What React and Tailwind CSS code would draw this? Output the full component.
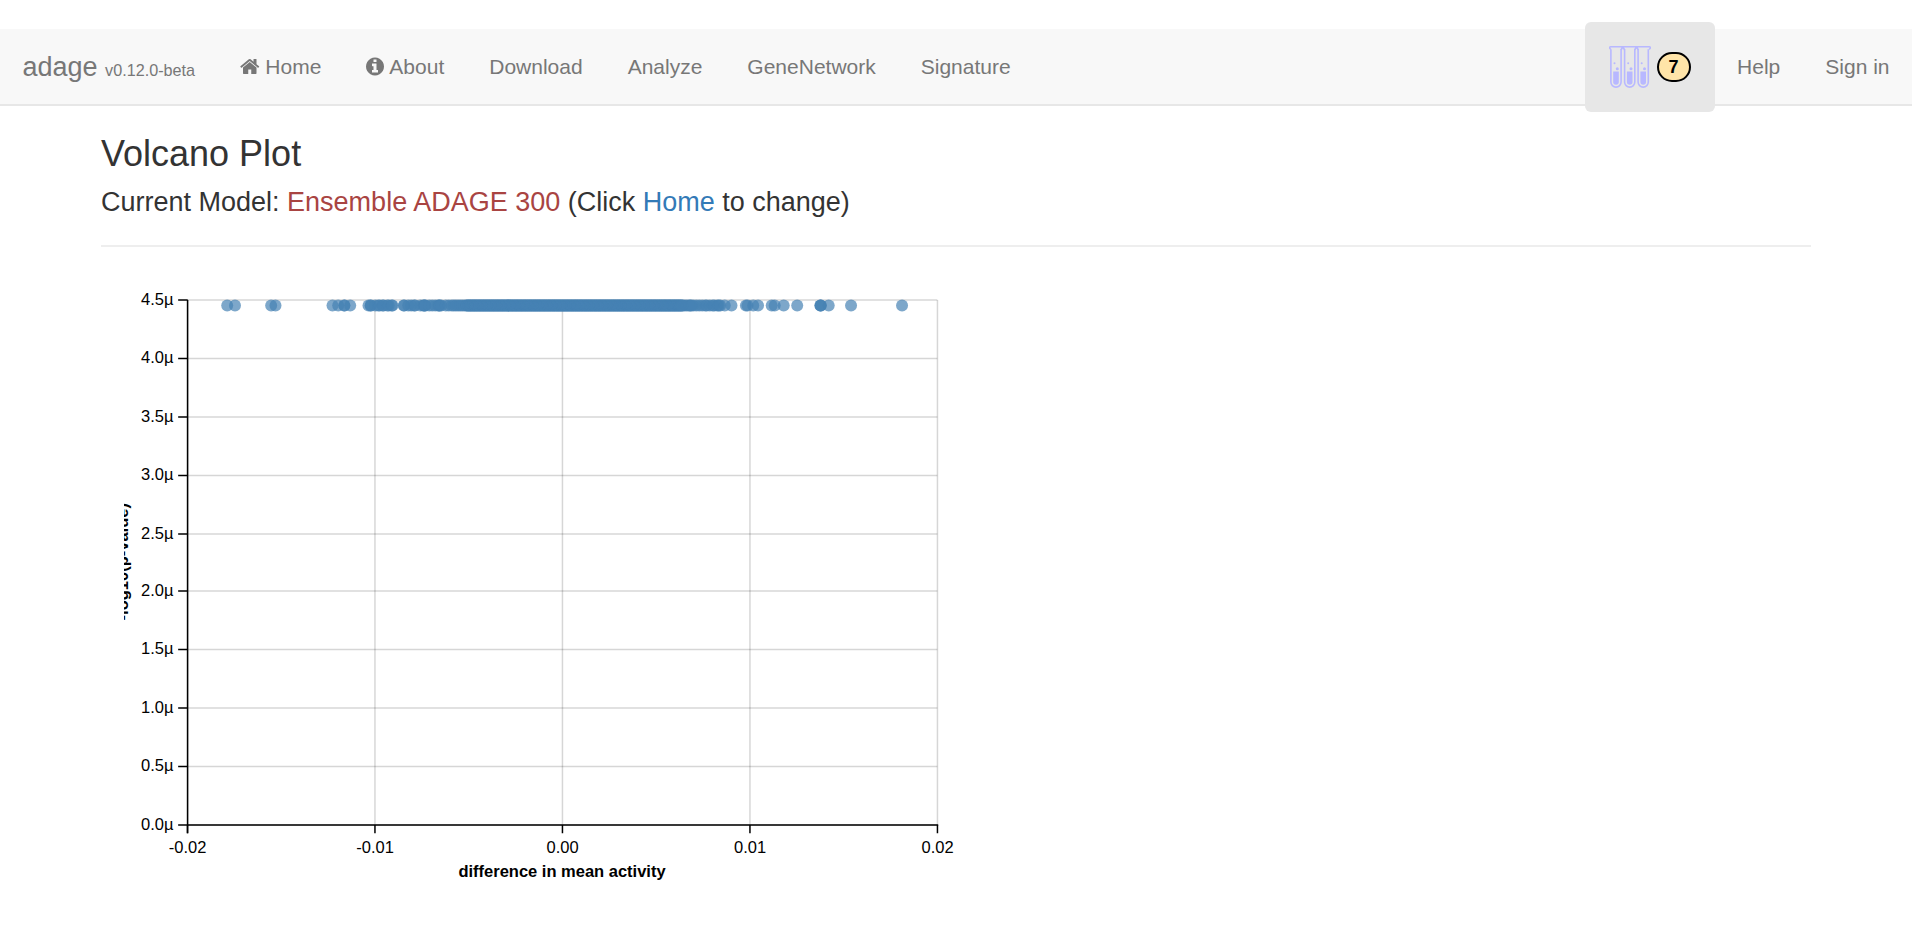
const yTicks = [
  ["4.5µ", 0], ["4.0µ", 39], ["3.5µ", 78], ["3.0µ", 117], ["2.5µ", 156],
  ["2.0µ", 194], ["1.5µ", 233], ["1.0µ", 272], ["0.5µ", 311], ["0.0µ", 350],
];
const xTicks = [["-0.02", 0], ["-0.01", 125], ["0.00", 250], ["0.01", 375], ["0.02", 500]];

// Horizontal positions of the points, in plot pixels.
const sparse = [
  26.3, 31.5, 55.6, 58.5, 96.5, 100.3, 104.4, 104.4, 108.3,
  120.5, 122, 122, 125, 127, 128, 130, 130.5, 133, 134, 136, 136.5,
  144, 144.3, 147, 149, 151, 151.5, 155, 157, 157.5, 158, 158.5, 161, 163, 165, 167, 167.5, 168, 169, 172, 174,
  335, 337, 339, 341, 343, 345, 346, 348, 350, 351, 353, 354, 355, 358, 362.5,
  372.1, 373.2, 377, 380.2, 389.3, 391.3, 397.3, 406.3, 421.8, 421.8, 422.1, 427.3, 442.2, 476.2,
];
const dense = Array.from({ length: 115 }, (_, i) => 176 + i * 1.4);
const core = Array.from({ length: 170 }, (_, i) => 186 + i * 0.85);
const points = [...sparse, ...dense, ...core];

function HomeIcon() {
  return (
    <svg className="inline-block h-[21px] w-[19.5px] align-[-3px]" viewBox="64 0 1664 1792" fill="currentColor">
      <path d="M1472 992v480q0 26-19 45t-45 19h-384v-384h-256v384h-384q-26 0-45-19t-19-45v-480q0-1 .5-3t.5-3l575-474 575 474q1 2 1 6zm223-69l-62 74q-8 9-21 11h-3q-13 0-21-7l-692-577-692 577q-12 8-24 7-13-2-21-11l-62-74q-8-10-7-23.5t11-21.5l719-599q32-26 76-26t76 26l244 204v-195q0-14 9-23t23-9h192q14 0 23 9t9 23v408l219 182q10 8 11 21.5t-7 23.5z" />
    </svg>
  );
}

function InfoIcon() {
  return (
    <svg className="mr-[0.3px] inline-block h-[21px] w-[18px] align-[-3px]" viewBox="128 0 1536 1792" fill="currentColor">
      <path d="M1152 1376v-160q0-14-9-23t-23-9h-96v-512q0-14-9-23t-23-9h-320q-14 0-23 9t-9 23v160q0 14 9 23t23 9h96v320h-96q-14 0-23 9t-9 23v160q0 14 9 23t23 9h448q14 0 23-9t9-23zm-128-896v-160q0-14-9-23t-23-9h-192q-14 0-23 9t-9 23v160q0 14 9 23t23 9h192q14 0 23-9t9-23zm640 416q0 209-103 385.5t-279.5 279.5-385.5 103-385.5-103-279.5-279.5-103-385.5 103-385.5 279.5-279.5 385.5-103 385.5 103 279.5 279.5 103 385.5z" />
    </svg>
  );
}

function Tube({ x }) {
  return (
    <g transform={`translate(${x} 0)`}>
      <path d="M1.9 3.2V36a5.1 5.1 0 0 0 10.2 0V3.2" fill="none" stroke="#b8b8ff" strokeWidth="1.6" />
      <path d="M4.2 25.5h5.6V36a2.8 2.8 0 0 1-5.6 0z" fill="#b8b8ff" />
      <circle cx="8.3" cy="22.7" r="1.5" fill="#b8b8ff" />
      <circle cx="5.5" cy="17.3" r="1" fill="#b8b8ff" />
    </g>
  );
}

function TubesIcon() {
  return (
    <svg className="h-[42px] w-[42px]" viewBox="0 0 42 42">
      <path d="M1.9 3.2C.3 2.5.3.8 1.6.8h38.8c1.3 0 1.3 1.7-.3 2.4M12 4c.3-1.7 1.2-2.5 3.2-3.3M15.6 4C15.3 2.3 14.4 1.5 12.4.7M25.7 4c.3-1.7 1.2-2.5 3.2-3.3M29.3 4c-.3-1.7-1.2-2.5-3.2-3.3" fill="none" stroke="#b8b8ff" strokeWidth="1.6" />
      <Tube x={0} />
      <Tube x={13.7} />
      <Tube x={27.2} />
    </svg>
  );
}

function NavItem({ children }) {
  return <a className="px-[22.5px] whitespace-nowrap">{children}</a>;
}

function VolcanoPlot() {
  return (
    <svg className="block h-[615px] w-[870px] overflow-hidden" viewBox="0 0 580 410" fontFamily="'Liberation Sans', Arial, sans-serif" fontSize="11">
      <g transform="translate(42.5 12)">
        <g stroke="#000" strokeOpacity="0.16">
          {yTicks.map(([t, y]) => <line key={t} x1="0" x2="499.7" y1={y} y2={y} />)}
          {xTicks.map(([t, x]) => <line key={t} x1={x - 0.2} x2={x - 0.2} y1="0" y2="350" />)}
        </g>
        <g fill="#4682b4" fillOpacity="0.7">
          {points.map((x, i) => <circle key={i} cx={x} cy="3.6" r="4" />)}
        </g>
        <g stroke="#000">
          <path d="M-.1 0V355.5M0 350H500.3" />
          {yTicks.map(([t, y]) => <line key={t} x1="-6.4" x2="0" y1={y} y2={y} />)}
          {xTicks.map(([t, x]) => <line key={t} x1={x - 0.2} x2={x - 0.2} y1="350" y2="355.5" />)}
        </g>
        <g textAnchor="end">
          {yTicks.map(([t, y]) => <text key={t} x="-9.5" y={y + 3.3}>{t}</text>)}
        </g>
        <g textAnchor="middle">
          {xTicks.map(([t, x]) => <text key={t} x={x - 0.1} y="368.4">{t}</text>)}
          <text x="249.5" y="384.5" fontWeight="bold">difference in mean activity</text>
          <text transform="translate(-39.8 174.5) rotate(-90)" fontWeight="bold">-log10(p-value)</text>
        </g>
      </g>
    </svg>
  );
}

export default function App() {
  return (
    <div className="min-h-screen bg-white pt-[29px] font-['Liberation_Sans',Arial,sans-serif] text-[#333]">
      <nav className="flex h-[77px] items-center border-b-2 border-[#e7e7e7] bg-[#f8f8f8] text-[21px] leading-[30px] text-[#777]">
        <a className="w-[217.5px] shrink-0 pt-1 pl-[22.5px] text-[27px] whitespace-nowrap">
          adage <span className="text-[16.2px]">v0.12.0-beta</span>
        </a>
        <NavItem><HomeIcon /> Home</NavItem>
        <NavItem><InfoIcon /> About</NavItem>
        <NavItem>Download</NavItem>
        <NavItem>Analyze</NavItem>
        <NavItem>GeneNetwork</NavItem>
        <NavItem>Signature</NavItem>
        <div className="ml-auto flex items-center">
          <a className="-my-2 flex h-[90px] w-[130px] items-center gap-[6px] rounded-md bg-[#e7e7e7] pl-6">
            <TubesIcon />
            <span className="mt-px flex h-[30px] w-[34px] items-center justify-center rounded-[15px] border-2 border-black bg-[#ffe4a8] text-[18px] leading-none font-bold text-black">7</span>
          </a>
          <NavItem>Help</NavItem>
          <NavItem>Sign in</NavItem>
        </div>
      </nav>
      <main className="pr-[101.5px] pl-[101px]">
        <h2 className="pt-[28px] text-[36px] leading-10">Volcano Plot</h2>
        <h3 className="mt-[13px] text-[27px] leading-[30px]">
          Current Model: <span className="text-[#a94442]">Ensemble ADAGE 300</span> (Click <a className="text-[#337ab7]">Home</a> to change)
        </h3>
        <hr className="mt-[28px] border-t-2 border-[#eee]" />
        <div className="mt-[35px] pl-[23px]">
          <VolcanoPlot />
        </div>
      </main>
    </div>
  );
}
